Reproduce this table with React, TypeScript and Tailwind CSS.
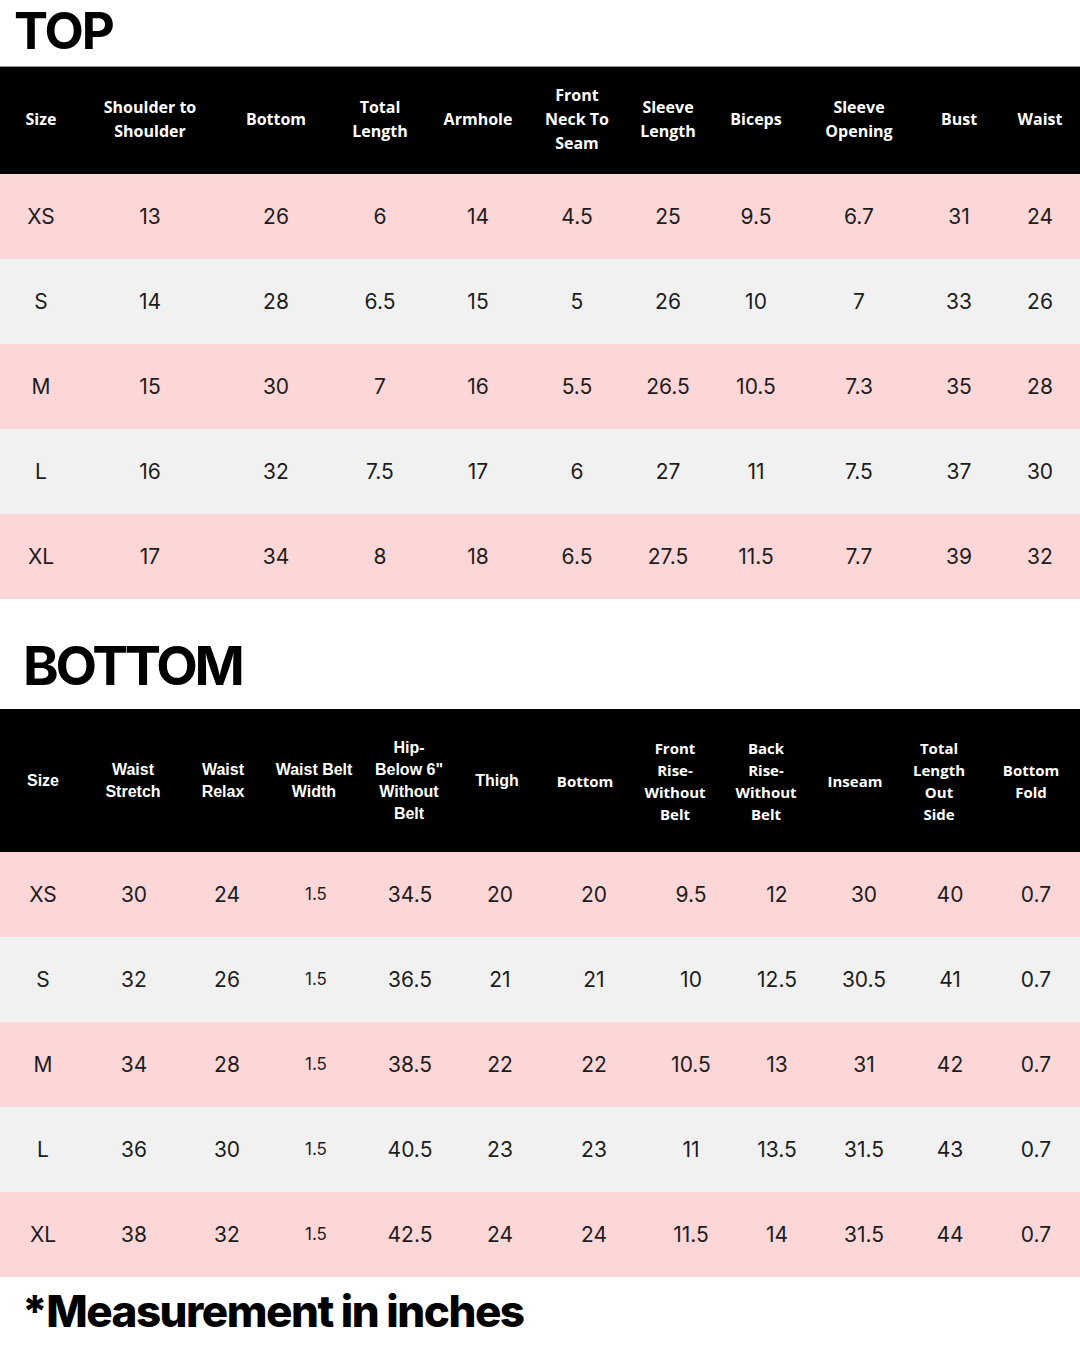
const topCols = '82px 136px 116px 92px 104px 94px 88px 88px 118px 82px 80px'
const bottomHeadCols = '86px 94px 86px 96px 94px 82px 94px 86px 96px 82px 86px 98px'
const bottomCols = '86px 96px 90px 88px 100px 80px 108px 86px 86px 88px 84px 88px'

const topHeaders = [
  ['Size'],
  ['Shoulder to', 'Shoulder'],
  ['Bottom'],
  ['Total', 'Length'],
  ['Armhole'],
  ['Front', 'Neck To', 'Seam'],
  ['Sleeve', 'Length'],
  ['Biceps'],
  ['Sleeve', 'Opening'],
  ['Bust'],
  ['Waist'],
]

const topRows = [
  ['XS', '13', '26', '6', '14', '4.5', '25', '9.5', '6.7', '31', '24'],
  ['S', '14', '28', '6.5', '15', '5', '26', '10', '7', '33', '26'],
  ['M', '15', '30', '7', '16', '5.5', '26.5', '10.5', '7.3', '35', '28'],
  ['L', '16', '32', '7.5', '17', '6', '27', '11', '7.5', '37', '30'],
  ['XL', '17', '34', '8', '18', '6.5', '27.5', '11.5', '7.7', '39', '32'],
]

// first six columns use an arial-ish face, the rest the rounder one
const bottomHeaders: {lines: string[]; arial: boolean}[] = [
  {lines: ['Size'], arial: true},
  {lines: ['Waist', 'Stretch'], arial: true},
  {lines: ['Waist', 'Relax'], arial: true},
  {lines: ['Waist Belt', 'Width'], arial: true},
  {lines: ['Hip-', 'Below 6"', 'Without', 'Belt'], arial: true},
  {lines: ['Thigh'], arial: true},
  {lines: ['Bottom'], arial: false},
  {lines: ['Front', 'Rise-', 'Without', 'Belt'], arial: false},
  {lines: ['Back', 'Rise-', 'Without', 'Belt'], arial: false},
  {lines: ['Inseam'], arial: false},
  {lines: ['Total', 'Length', 'Out', 'Side'], arial: false},
  {lines: ['Bottom', 'Fold'], arial: false},
]

const bottomRows = [
  ['XS', '30', '24', '1.5', '34.5', '20', '20', '9.5', '12', '30', '40', '0.7'],
  ['S', '32', '26', '1.5', '36.5', '21', '21', '10', '12.5', '30.5', '41', '0.7'],
  ['M', '34', '28', '1.5', '38.5', '22', '22', '10.5', '13', '31', '42', '0.7'],
  ['L', '36', '30', '1.5', '40.5', '23', '23', '11', '13.5', '31.5', '43', '0.7'],
  ['XL', '38', '32', '1.5', '42.5', '24', '24', '11.5', '14', '31.5', '44', '0.7'],
]

function DataRow({cells, cols, index}: {cells: string[]; cols: string; index: number}) {
  return (
    <div
      className={`grid h-[85px] items-center ${index % 2 === 0 ? 'bg-[#fdd6d7]' : 'bg-[#f1f1f1]'}`}
      style={{gridTemplateColumns: cols}}
    >
      {cells.map((c, i) => (
        <div
          key={i}
          className={`text-center text-[#1c1c1c] font-['Inter',sans-serif] ${c === '1.5' ? 'text-[17px]' : 'text-[21px]'}`}
        >
          {c}
        </div>
      ))}
    </div>
  )
}

export default function App() {
  return (
    <div className="w-[1080px] h-[1350px] bg-white overflow-hidden">
      <div className="h-[66px] pl-[14px] flex items-center">
        <h1 className="text-[51px] leading-none font-bold tracking-[-2px] text-black font-['Inter',sans-serif] -mt-[6px]">
          TOP
        </h1>
      </div>
      <div className="h-px bg-[#9a9a9a]" />

      <div className="grid h-[107px] items-center bg-black pb-[3px]" style={{gridTemplateColumns: topCols}}>
        {topHeaders.map((lines, i) => (
          <div key={i} className="text-center text-white font-bold text-[16px] leading-[24px] font-['Open_Sans',sans-serif]">
            {lines.map((l, j) => (
              <div key={j}>{l}</div>
            ))}
          </div>
        ))}
      </div>
      {topRows.map((r, i) => (
        <DataRow key={i} cells={r} cols={topCols} index={i} />
      ))}

      <div className="h-[110px] pl-[23px] flex items-end pb-[16px]">
        <h2 className="text-[54px] leading-none font-bold tracking-[-3.2px] text-black font-['Inter',sans-serif]">
          BOTTOM
        </h2>
      </div>

      <div className="grid h-[143px] items-center bg-black" style={{gridTemplateColumns: bottomHeadCols}}>
        {bottomHeaders.map((h, i) => (
          <div
            key={i}
            className={`text-center text-white font-bold leading-[22px] ${
              h.arial ? "text-[16px] font-['Liberation_Sans',sans-serif]" : "text-[15px] font-['Open_Sans',sans-serif]"
            }`}
          >
            {h.lines.map((l, j) => (
              <div key={j} className="whitespace-nowrap">
                {l}
              </div>
            ))}
          </div>
        ))}
      </div>
      {bottomRows.map((r, i) => (
        <DataRow key={i} cells={r} cols={bottomCols} index={i} />
      ))}

      <div className="pl-[22px] pt-[12px]">
        <p className="text-[44px] leading-none font-extrabold tracking-[-1.5px] text-black font-['Inter',sans-serif]">
          *Measurement in inches
        </p>
      </div>
    </div>
  )
}
